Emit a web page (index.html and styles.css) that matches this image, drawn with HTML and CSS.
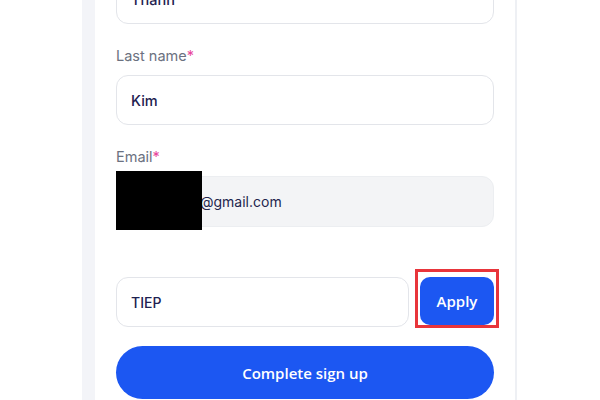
FILE: index.html
```html
<!DOCTYPE html>
<html>
<head>
<meta charset="utf-8">
<link rel="stylesheet" href="styles.css">
</head>
<body>
<div class="page">
  <div class="card">
    <div class="input first">Thanh</div>
    <div class="label">Last name<span class="req">*</span></div>
    <div class="input">Kim</div>
    <div class="label">Email<span class="req">*</span></div>
    <div class="input disabled email">
      <span class="email-value">@gmail.com</span>
      <div class="redact"></div>
    </div>
    <div class="coupon-row">
      <div class="input coupon">TIEP</div>
      <div class="apply-wrap">
        <button class="apply">Apply</button>
        <div class="highlight"></div>
      </div>
    </div>
    <button class="complete">Complete sign up</button>
  </div>
</div>
</body>
</html>
```
FILE: styles.css
```css
* { box-sizing: border-box; }
html, body {
  margin: 0;
  padding: 0;
  background: #ffffff;
  height: 400px;
  overflow: hidden;
}
body {
  font-family: Inter, "Noto Sans", sans-serif;
}
.page {
  margin-left: 82px;
  width: 435px;
  height: 400px;
  background: #f3f4f8;
  padding-left: 13px;
}
.card {
  background: #ffffff;
  height: 100%;
  padding: 0 21px;
  border-right: 2px solid #eef0f4;
  display: flex;
  flex-direction: column;
}
.input {
  height: 50px;
  border: 1px solid #e3e5ea;
  border-radius: 12px;
  background: #ffffff;
  display: flex;
  align-items: center;
  padding-left: 14px;
  font-size: 14.5px;
  color: #1e2150;
  font-weight: 500;
}
.input.first {
  margin-top: -26px;
}
.label {
  margin-top: 22px;
  height: 20px;
  line-height: 20px;
  font-size: 14.5px;
  color: #6b7180;
  margin-bottom: 9px;
}
.req {
  color: #e8479b;
}
.input.disabled {
  background: #f3f4f6;
  border-color: #eceef1;
  height: 51px;
  position: relative;
}
.email-value {
  padding-left: 69px;
  color: #22254d;
  font-weight: 400;
  font-size: 14px;
}
.redact {
  position: absolute;
  left: -1px;
  top: -6px;
  width: 86px;
  height: 59px;
  background: #000000;
}
.coupon-row {
  margin-top: 50px;
  display: flex;
  gap: 11px;
  align-items: flex-start;
}
.input.coupon {
  width: 293px;
  height: 50px;
  font-size: 14px;
}
.apply-wrap {
  position: relative;
  width: 74px;
  height: 48px;
}
.apply {
  width: 74px;
  height: 48px;
  border: none;
  border-radius: 10px;
  background: #1c57f2;
  color: #ffffff;
  font-family: "Open Sans", "Noto Sans", sans-serif;
  font-weight: 600;
  font-size: 15px;
  padding: 0;
}
.highlight {
  position: absolute;
  left: -5px;
  top: -8px;
  width: 84px;
  height: 59px;
  border: 3px solid #e8353b;
}
.complete {
  margin-top: 19px;
  height: 53px;
  border: none;
  border-radius: 27px;
  background: #1c57f2;
  color: #ffffff;
  font-family: "Open Sans", "Noto Sans", sans-serif;
  font-weight: 600;
  font-size: 15px;
  width: 100%;
}
```
